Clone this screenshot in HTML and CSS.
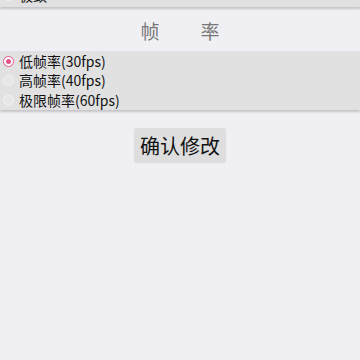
FILE: index.html
```html
<!DOCTYPE html>
<html>
<head>
<meta charset="utf-8">
<link rel="stylesheet" href="styles.css">
</head>
<body>
<div class="page">
  <div class="panel top-panel">
    <label class="row"><span class="radio"></span><span class="label">极致</span></label>
  </div>
  <div class="title">帧<span class="gap"></span>率</div>
  <div class="panel">
    <label class="row"><span class="radio checked"></span><span class="label">低帧率(30fps)</span></label>
    <label class="row"><span class="radio"></span><span class="label">高帧率(40fps)</span></label>
    <label class="row"><span class="radio"></span><span class="label">极限帧率(60fps)</span></label>
  </div>
  <div class="actions">
    <button class="confirm">确认修改</button>
  </div>
</div>
</body>
</html>
```
FILE: styles.css
```css
html, body {
  margin: 0;
  padding: 0;
  background: #f0eff4;
  width: 360px;
  height: 360px;
  overflow: hidden;
  font-family: "Noto Sans CJK SC", "Noto Sans", sans-serif;
}
.page {
  display: flex;
  flex-direction: column;
}
.panel {
  background: #e1e1e1;
  box-shadow: 0 2px 2px rgba(0,0,0,0.18);
  display: flex;
  flex-direction: column;
  padding: 1px 0 0;
}
.top-panel {
  margin-top: -14px;
  padding: 0 0 1px;
}
.row {
  display: flex;
  align-items: center;
  height: 19.5px;
  padding-left: 3px;
}
.radio {
  width: 9px;
  height: 9px;
  border-radius: 50%;
  border: 1.5px solid #f3f3f3;
  background: #e6e6e6;
  box-sizing: content-box;
  margin-right: 5px;
  position: relative;
}
.radio.checked {
  border: 1.5px solid #e5528a;
  background: #fff;
}
.radio.checked::after {
  content: "";
  position: absolute;
  left: 2px;
  top: 2px;
  width: 5px;
  height: 5px;
  border-radius: 50%;
  background: #e5528a;
}
.label {
  font-size: 14px;
  color: #111;
  line-height: 19px;
}
.title {
  height: 40px;
  display: flex;
  justify-content: center;
  align-items: center;
  font-size: 19px;
  color: #777;
  margin-top: 3px;
  padding-top: 1px;
}
.gap {
  display: inline-block;
  width: 41px;
}
.actions {
  display: flex;
  justify-content: center;
  margin-top: 18px;
}
.confirm {
  font-family: "Noto Sans CJK SC", sans-serif;
  font-size: 20px;
  color: #111;
  background: #dedede;
  border: none;
  border-radius: 2px;
  height: 34px;
  width: 92px;
  padding: 0;
  box-shadow: 0 1px 1px rgba(0,0,0,0.08);
}
```
